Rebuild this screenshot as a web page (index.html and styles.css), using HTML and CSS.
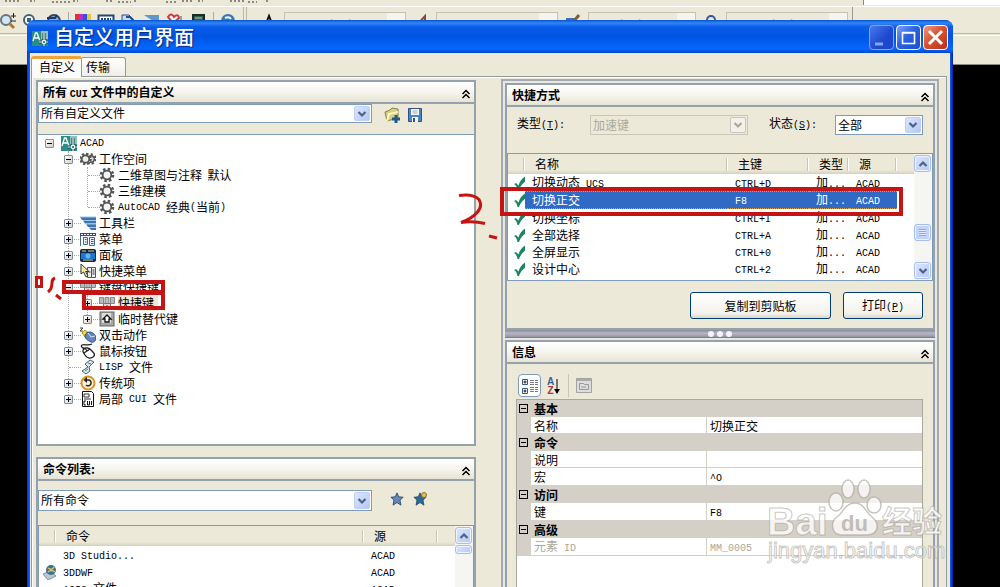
FILE: index.html
```html
<!DOCTYPE html>
<html lang="zh-CN">
<head>
<meta charset="utf-8">
<title>自定义用户界面</title>
<link rel="stylesheet" href="styles.css">
</head>
<body>
<svg class="defs" width="0" height="0" aria-hidden="true">
  <symbol id="i-chev" viewBox="0 0 10 8"><path d="M1.5 2 5 5.5 8.5 2" fill="none" stroke="currentColor" stroke-width="2.2"/></symbol>
  <symbol id="i-collapse" viewBox="0 0 10 10"><path d="M1.5 5 5 1.5 8.500 5M1.500 9 5 5.500 8.500 9" fill="none" stroke="#000" stroke-width="1.5"/></symbol>
  <symbol id="i-acad" viewBox="0 0 16 16"><path d="M0 1h16v15H0z" fill="#2b8d88"/><path d="M9 1h7v8h-7z" fill="#8fc3bd"/><path d="M1 11 3.500 3h1.500l3 8M2 8h5" stroke="#fff" stroke-width="1.300" fill="none"/><path d="M12 3v13M7 12h9" stroke="#123f44" stroke-width="3"/><path d="M12 3v13M7 12h9" stroke="#fff" stroke-width="1.200"/><path d="M10.500 10.500h3v3h-3z" fill="#2b8d88" stroke="#fff"/></symbol>
  <symbol id="i-gear" viewBox="0 0 16 16"><circle cx="8" cy="8" r="5.800" fill="none" stroke="#555" stroke-width="3" stroke-dasharray="2.400 2.150"/><circle cx="8" cy="8" r="4.300" fill="#f4f4f4" stroke="#555" stroke-width="1.800"/></symbol>
  <symbol id="i-gears" viewBox="0 0 16 16"><circle cx="11" cy="8" r="4.200" fill="#fff" stroke="#555" stroke-width="3" stroke-dasharray="2 1.800"/><circle cx="11" cy="8" r="3.200" fill="#ddd" stroke="#555" stroke-width="1.400"/><circle cx="5.500" cy="8" r="5" fill="#fff" stroke="#555" stroke-width="2.600" stroke-dasharray="2.200 1.700"/><circle cx="5.500" cy="8" r="3.700" fill="#eee" stroke="#555" stroke-width="1.700"/></symbol>
  <symbol id="i-bars" viewBox="0 0 16 16"><path d="M0 2h16v3H2zM3 5.500h13v3H5zM6 9h10v3H8zM9 12.500h7v2.500h-5z" fill="#3e73ae"/><path d="M0 2h16M3 5.500h13M6 9h10M9 12.500h7" stroke="#9fc6e8"/></symbol>
  <symbol id="i-menu" viewBox="0 0 16 16"><path d="M0 2h16v3H0z" fill="#23517f"/><path d="M1 3.500h14" stroke="#fff" stroke-dasharray="2 1"/><path d="M.5 5v10M3.500 6.500h4v7h-4zM9.500 6.500h5v8h-5z" stroke="#48698b" fill="#e8eef4"/><path d="M5 8.500h1.500M5 11h1.500M11 8.500h2.500M11 10.500h2.500M11 12.500h2.500" stroke="#36597c"/></symbol>
  <symbol id="i-panel" viewBox="0 0 16 16"><rect y="2" width="16" height="13" rx="2" fill="#10294d"/><path d="M1 6h14v6H1z" fill="#1b78d0"/><path d="M2 4h4M8 4h6M3 13h10" stroke="#ddd27a"/><circle cx="8" cy="9" r="2.500" fill="#65b5ed"/></symbol>
  <symbol id="i-ctx" viewBox="0 0 16 16"><path d="M7.500 4.500h4v10h-4zM11.500 4.500h4v10h-4z" fill="#eee" stroke="#555"/><path d="M12.500 7h2M12.500 9h2M12.500 11h2M8.500 9h2" stroke="#333"/><path d="M1 1v10l2.500-2L6 14l2-1-2.500-4.500H9z" fill="#f5eda1" stroke="#333"/></symbol>
  <symbol id="i-keys" viewBox="0 0 16 16"><path d="M.5 2.500h4v6h-4zM6 2.500h4v6H6zM11.500 2.500h4v6h-4z" fill="#bbb" stroke="#888"/><path d="M4.500 8.500h7v6h-7z" fill="#d8d8d8" stroke="#777"/><path d="M6 13l2-3 2 3z" fill="#222"/></symbol>
  <symbol id="i-shift" viewBox="0 0 16 16"><rect x="1" y="1" width="14" height="14" fill="#a7a7a7" stroke="#666"/><path d="M3 2h9v10H3z" fill="#ddd"/><path d="M8 4l4 4h-2v3H6V8H4z" fill="#fff" stroke="#111" stroke-width="1.300"/></symbol>
  <symbol id="i-dbl" viewBox="0 0 16 16"><path d="M2 6 5 3l5 4-4 4z" fill="#f6d83e" stroke="#b79420"/><path d="M5 9c0-3 3-4 5-4s6 3 6 6-3 5-5 4-6-3-6-6z" fill="#6286bf" stroke="#274983"/><path d="M8 6l3 4 4-1" fill="none" stroke="#d6e4f6"/><path d="M0 1h3L0 4h3" fill="none" stroke="#444"/></symbol>
  <symbol id="i-mouse" viewBox="0 0 16 16"><path d="M4 6c2-2 5-1 7 1 3 3 5 5 2 7s-6 1-8-2S2 8 4 6z" fill="#fff" stroke="#222" stroke-width="1.300"/><path d="M4 10l6-4M7 8 5 5M5 5C3 6 0 3 2 2s6 1 10-1" fill="none" stroke="#222" stroke-width="1.300"/></symbol>
  <symbol id="i-lisp" viewBox="0 0 16 16"><path d="M5 5l5-4 4 2-5 5 1 4-4 3-4-3 6-4z" fill="#d7e8ee" stroke="#49616f"/><path d="M8 4l3 1M5 12l3-2" stroke="#498097"/></symbol>
  <symbol id="i-legacy" viewBox="0 0 16 16"><circle cx="8" cy="8" r="6.500" fill="#fff1cf" stroke="#d9932d" stroke-width="2"/><path d="M6 5h3a3 3 0 1 1-3 5" fill="none" stroke="#222" stroke-width="1.500"/><path d="M7 2v6L3.500 5z" fill="#222"/></symbol>
  <symbol id="i-cui" viewBox="0 0 16 16"><path d="M2.500.500h9l2 2v13h-11z" fill="#fff" stroke="#111"/><path d="M4 3h5v3H4zM4 8h7" stroke="#333" fill="none"/><path d="M6 10H4v4h2M7.500 10v4h2v-4M11.500 10v4" fill="none" stroke="#111"/></symbol>
  <symbol id="i-star" viewBox="0 0 16 16"><path d="M8 1l2 4.500 5 .500-3.600 3.200L12.500 15 8 12l-4.500 3 1.100-5.800L1 6l5-.500z" fill="currentColor" stroke="#29486f"/></symbol>
  <symbol id="i-tick" viewBox="0 0 14 16"><path d="M1 9l2-1 2.500 2.500C7 6 9 3 13 1v5C9 9 7 12 6 15H4.500C4 12 3 10 1 9z" fill="#1d8564"/></symbol>
</svg>

<header class="app-bar">
  <div class="app-row app-row-top">
    <svg class="crumbs" width="280" height="4" viewBox="0 0 280 4" aria-hidden="true"><path d="M5 1h16M30 1h5M52 2h18M73 1h5M106 1h8M118 2h13M134 1h3M166 2h10M182 1h12M198 1h5M230 1h14M248 2h9M266 1h4" stroke="#8c8a80" stroke-width="2" stroke-dasharray="2 2"/></svg>
    <div class="app-sheet"></div>
  </div>
  <div class="app-row app-tools">
    <svg class="tools-icons" width="240" height="28" viewBox="0 0 240 28" aria-hidden="true">
      <circle cx="6" cy="13" r="5" fill="#d5e6f3" stroke="#66757f" stroke-width="2"/><path d="m10 17 4 4" stroke="#b27630" stroke-width="3"/><path d="M11 9h5M13.500 6v5M11 14h5" stroke="#222"/>
      <circle cx="29" cy="13" r="5" fill="#fff" stroke="#495e75" stroke-width="2"/><path d="M27 11h4v4h-4z" fill="#345c97"/>
      <circle cx="54" cy="14" r="6" fill="#8faecc" stroke="#33465f" stroke-width="2"/><path d="M47 11h8l2-3" stroke="#19376b" stroke-width="2" fill="none"/>
      <path d="M68.500 5v20" stroke="#aaa"/><path d="M75 7h4v6h-4z" fill="#e62e3b"/><path d="M79 7h4v6h-4z" fill="#b52ed0"/><path d="M83 7h4v6h-4z" fill="#3353dc"/><path d="M87 7h4v6h-4z" fill="#e2c83b"/>
      <path d="M98.500 8.500h15v12h-15z" fill="#fff" stroke="#234677" stroke-width="2"/><path d="M101 12h10" stroke="#234677" stroke-width="2" stroke-dasharray="2 1"/>
      <path d="M122 8h7l4 4v12h-11z" fill="#c7dcf2" stroke="#24518c"/><path d="M126 10h4l4 4" stroke="#24518c" stroke-width="2" fill="none"/>
      <path d="M144 8h15v10z" fill="#5d97cb"/><path d="M168 10q3-5 6 0 4-4 5 1l-6 5z" fill="#fff" stroke="#d5383c" stroke-width="2"/><path d="M181 9v10" stroke="#555"/>
      <path d="M193 8h11v14h-11z" fill="#345c4a" stroke="#1a2c26" stroke-width="2"/><path d="M195 11h7" stroke="#b5d299"/><path d="M213.500 5v20" stroke="#aaa"/><circle cx="228" cy="14" r="7" fill="#3678b6"/><path d="M225 11q4-2 6 1" stroke="#fff" stroke-width="2" fill="none"/>
    </svg>
    <div class="tool-set">
      <svg class="tool-ic" width="16" height="16" viewBox="0 0 16 16" aria-hidden="true"><path d="M4 14 8 4l4 10M5 11h6" fill="none" stroke="#111" stroke-width="2"/></svg>
      <select class="back-select" aria-label="文字样式" disabled><option>Standard</option></select>
      <svg class="tool-ic" width="16" height="16" viewBox="0 0 16 16" aria-hidden="true"><path d="M3 14 12 4v9" fill="none" stroke="#8f4434" stroke-width="2"/></svg>
      <select class="back-select" aria-label="标注样式" disabled><option>ISO-25</option></select>
      <svg class="tool-ic" width="16" height="16" viewBox="0 0 16 16" aria-hidden="true"><path d="M1 6h10v8H1z" fill="#3970b7"/><path d="m9 9 5-6" stroke="#825d38" stroke-width="3"/></svg>
      <select class="back-select near" aria-label="表格样式" disabled><option>Standard</option></select>
      <svg class="tool-ic" width="16" height="16" viewBox="0 0 16 16" aria-hidden="true"><circle cx="8" cy="8" r="4" fill="none" stroke="#3059a8" stroke-width="2"/></svg>
      <select class="back-select" aria-label="引线样式" disabled><option>Standard</option></select>
    </div>
  </div>
  <div class="app-row app-row-last"></div>
</header>

<main class="dialog">
  <div class="titlebar">
    <svg width="16" height="16"><use href="#i-acad"/></svg>
    <h1>自定义用户界面</h1>
    <button class="win min" aria-label="最小化"><svg width="24" height="25" viewBox="0 0 24 25"><path d="M5 18h8" stroke="#86a3f2" stroke-width="3"/></svg></button>
    <button class="win max" aria-label="最大化"><svg width="24" height="25" viewBox="0 0 24 25"><path d="M5.500 6.500h12v11h-12zM5 7h13" fill="none" stroke="#fff" stroke-width="1.600"/></svg></button>
    <button class="win close" aria-label="关闭"><svg width="24" height="25" viewBox="0 0 24 25"><path d="m5 5 13 13M18 5 5 18" stroke="#fff" stroke-width="3"/></svg></button>
  </div>

  <div class="client">
    <div class="tabs" role="tablist">
      <button class="tab active" role="tab" aria-selected="true">自定义</button>
      <button class="tab" role="tab" aria-selected="false">传输</button>
    </div>
    <div class="page">
      <div class="left">
        <section class="panel">
          <div class="panel-head"><h2>所有 <span class="en">CUI</span> 文件中的自定义</h2><button class="fold" aria-label="折叠"><svg width="10" height="10"><use href="#i-collapse"/></svg></button></div>
          <div class="bar">
            <div class="combo grow"><select aria-label="自定义文件"><option>所有自定义文件</option></select><span class="drop"><svg width="10" height="8"><use href="#i-chev"/></svg></span></div>
            <div class="bar-tools">
              <button class="icon" aria-label="加载"><svg width="16" height="16" viewBox="0 0 16 16"><path d="M1 5 6 3l2-2 6 1v9l-11 3z" fill="#d8cf86" stroke="#85814c"/><path d="M3 14 5 7l9-2" fill="none" stroke="#fff7bd" stroke-width="2"/><path d="M12 8v8M8 12h8" stroke="#245c84" stroke-width="3"/></svg></button>
              <button class="icon" aria-label="保存"><svg width="16" height="16" viewBox="0 0 16 16"><path d="M1.500 1.500h13v13h-13z" fill="#4b83c5" stroke="#315183"/><path d="M4 2h8v6H4zM5 10h6v5H5z" fill="#f4f7fc"/><path d="M5.500 4h5M5.500 6h5" stroke="#aaa"/><path d="M6 11h2v4H6z" fill="#315183"/></svg></button>
            </div>
          </div>
          <div class="tree-box">
            <ul class="tree root">
              <li><div class="node"><button class="exp minus" aria-label="折叠"></button><svg width="16" height="16"><use href="#i-acad"/></svg><span class="en">ACAD</span></div>
                <ul class="tree">
                  <li><div class="node"><button class="exp minus" aria-label="折叠"></button><svg width="16" height="16"><use href="#i-gears"/></svg>工作空间</div>
                    <ul class="tree">
                      <li><div class="node"><i class="exp none"></i><svg width="16" height="16"><use href="#i-gear"/></svg>二维草图与注释&nbsp; 默认</div></li>
                      <li><div class="node"><i class="exp none"></i><svg width="16" height="16"><use href="#i-gear"/></svg>三维建模</div></li>
                      <li><div class="node"><i class="exp none"></i><svg width="16" height="16"><use href="#i-gear"/></svg><span class="en">AutoCAD </span>经典<span class="en">(</span>当前<span class="en">)</span></div></li>
                    </ul></li>
                  <li><div class="node"><button class="exp" aria-label="展开"></button><svg width="16" height="16"><use href="#i-bars"/></svg>工具栏</div></li>
                  <li><div class="node"><button class="exp" aria-label="展开"></button><svg width="16" height="16"><use href="#i-menu"/></svg>菜单</div></li>
                  <li><div class="node"><button class="exp" aria-label="展开"></button><svg width="16" height="16"><use href="#i-panel"/></svg>面板</div></li>
                  <li><div class="node"><button class="exp" aria-label="展开"></button><svg width="16" height="16"><use href="#i-ctx"/></svg>快捷菜单</div></li>
                  <li><div class="node"><button class="exp minus" aria-label="折叠"></button><svg width="16" height="16"><use href="#i-keys"/></svg>键盘快捷键</div>
                    <ul class="tree">
                      <li><div class="node"><button class="exp" aria-label="展开"></button><svg width="16" height="16"><use href="#i-keys"/></svg><span class="chosen">快捷键</span></div></li>
                      <li><div class="node"><button class="exp" aria-label="展开"></button><svg width="16" height="16"><use href="#i-shift"/></svg>临时替代键</div></li>
                    </ul></li>
                  <li><div class="node"><button class="exp" aria-label="展开"></button><svg width="16" height="16"><use href="#i-dbl"/></svg>双击动作</div></li>
                  <li><div class="node"><button class="exp" aria-label="展开"></button><svg width="16" height="16"><use href="#i-mouse"/></svg>鼠标按钮</div></li>
                  <li><div class="node"><i class="exp none"></i><svg width="16" height="16"><use href="#i-lisp"/></svg><span class="en">LISP </span>文件</div></li>
                  <li><div class="node"><button class="exp" aria-label="展开"></button><svg width="16" height="16"><use href="#i-legacy"/></svg>传统项</div></li>
                  <li><div class="node"><button class="exp" aria-label="展开"></button><svg width="16" height="16"><use href="#i-cui"/></svg>局部<span class="en"> CUI </span>文件</div></li>
                </ul></li>
            </ul>
          </div>
        </section>

        <section class="panel commands">
          <div class="panel-head"><h2>命令列表:</h2><button class="fold" aria-label="折叠"><svg width="10" height="10"><use href="#i-collapse"/></svg></button></div>
          <div class="bar tall">
            <div class="combo grow"><select aria-label="命令类别"><option>所有命令</option></select><span class="drop"><svg width="10" height="8"><use href="#i-chev"/></svg></span></div>
            <div class="bar-tools">
              <button class="icon star" aria-label="查找命令"><svg width="14" height="14"><use href="#i-star"/></svg></button>
              <button class="icon star new" aria-label="新建命令"><svg width="14" height="14" viewBox="0 0 14 14"><use href="#i-star"/><circle cx="11" cy="3" r="2.500" fill="#e8bd55" stroke="#94702a"/></svg></button>
            </div>
          </div>
          <div class="list">
            <table>
              <colgroup><col class="c-ic"><col><col class="c-src"><col class="c-end"></colgroup>
              <thead><tr><th></th><th>命令</th><th>源</th><th></th></tr></thead>
              <tbody>
                <tr><td></td><td><span class="en">3D Studio...</span></td><td><span class="en">ACAD</span></td><td></td></tr>
                <tr><td><svg class="row-ic" width="14" height="16" viewBox="0 0 14 16"><path d="M0 10l7-3 6 5-8 4z" fill="#b9c8d2" stroke="#8194a0"/><circle cx="8" cy="6" r="5" fill="#3d7191"/><path d="M5 4q4 3 6-1M5 8q3-3 7 0" fill="none" stroke="#d8c66f" stroke-width="1.500"/></svg></td><td><span class="en">3DDWF</span></td><td><span class="en">ACAD</span></td><td></td></tr>
                <tr><td></td><td><span class="en">ACIS </span>文件</td><td><span class="en">ACAD</span></td><td></td></tr>
              </tbody>
            </table>
            <div class="scroll"><button class="sbtn up" aria-label="向上"><svg width="10" height="8"><use href="#i-chev"/></svg></button><span class="thumb small"></span></div>
          </div>
        </section>
      </div>

      <div class="right">
        <section class="panel">
          <div class="panel-head"><h2>快捷方式</h2><button class="fold" aria-label="折叠"><svg width="10" height="10"><use href="#i-collapse"/></svg></button></div>
          <div class="filters">
            <label class="f-type" for="type">类型<span class="en">(<u>T</u>):</span></label>
            <div class="combo grow off"><select id="type" disabled><option>加速键</option></select><span class="drop"><svg width="10" height="8"><use href="#i-chev"/></svg></span></div>
            <label class="f-state" for="state">状态<span class="en">(<u>S</u>):</span></label>
            <div class="combo state"><select id="state"><option>全部</option></select><span class="drop"><svg width="10" height="8"><use href="#i-chev"/></svg></span></div>
          </div>
          <div class="list keys">
            <table>
              <colgroup><col class="k-ic"><col><col class="k-key"><col class="k-type"><col class="k-src"><col class="k-end"></colgroup>
              <thead><tr><th></th><th>名称</th><th>主键</th><th>类型</th><th>源</th><th></th></tr></thead>
              <tbody>
                <tr><td><svg class="tick" width="14" height="16"><use href="#i-tick"/></svg></td><td>切换动态<span class="en"> UCS</span></td><td><span class="en">CTRL+D</span></td><td>加<span class="en">...</span></td><td><span class="en">ACAD</span></td><td></td></tr>
                <tr class="sel"><td><svg class="tick" width="14" height="16"><use href="#i-tick"/></svg></td><td>切换正交</td><td><span class="en">F8</span></td><td>加<span class="en">...</span></td><td><span class="en">ACAD</span></td><td></td></tr>
                <tr><td><svg class="tick" width="14" height="16"><use href="#i-tick"/></svg></td><td>切换坐标</td><td><span class="en">CTRL+I</span></td><td>加<span class="en">...</span></td><td><span class="en">ACAD</span></td><td></td></tr>
                <tr><td><svg class="tick" width="14" height="16"><use href="#i-tick"/></svg></td><td>全部选择</td><td><span class="en">CTRL+A</span></td><td>加<span class="en">...</span></td><td><span class="en">ACAD</span></td><td></td></tr>
                <tr><td><svg class="tick" width="14" height="16"><use href="#i-tick"/></svg></td><td>全屏显示</td><td><span class="en">CTRL+0</span></td><td>加<span class="en">...</span></td><td><span class="en">ACAD</span></td><td></td></tr>
                <tr><td><svg class="tick" width="14" height="16"><use href="#i-tick"/></svg></td><td>设计中心</td><td><span class="en">CTRL+2</span></td><td>加<span class="en">...</span></td><td><span class="en">ACAD</span></td><td></td></tr>
              </tbody>
            </table>
            <div class="scroll"><button class="sbtn up" aria-label="向上"><svg width="10" height="8"><use href="#i-chev"/></svg></button><span class="thumb mid"></span><button class="sbtn down" aria-label="向下"><svg width="10" height="8"><use href="#i-chev"/></svg></button></div>
          </div>
          <div class="actions"><button class="push wide">复制到剪贴板</button><button class="push">打印<span class="en">(<u>P</u>)</span></button></div>
        </section>
        <div class="splitter"><i></i><i></i><i></i></div>
        <section class="panel info">
          <div class="panel-head"><h2>信息</h2><button class="fold" aria-label="折叠"><svg width="10" height="10"><use href="#i-collapse"/></svg></button></div>
          <div class="grid-tools">
            <button class="gt on" aria-label="按分类"><svg width="18" height="18" viewBox="0 0 18 18"><path d="M1.500 2.500h5v5h-5zM1.500 11.500h5v5h-5z" fill="#fff" stroke="#36597c"/><path d="M2.500 5h3M4 3.500v3M2.500 14h3M4 12.500v3" stroke="#111"/><path d="M9 3.500h8M9 5.500h8M9 7.500h8M9 10.500h8M9 12.500h8M9 14.500h8" stroke="#778" stroke-dasharray="4 1"/></svg></button>
            <button class="gt az" aria-label="按字母"><span class="az-t"><b>A</b><b>Z</b></span><svg width="6" height="18" viewBox="0 0 6 18"><path d="M3 2v12" stroke="#000"/><path d="M0 12h6l-3 5z"/></svg></button>
            <button class="gt sheet" aria-label="属性页"><svg width="16" height="15" viewBox="0 0 16 15"><path d="M.5.5h15v14H.5z" fill="#ddd" stroke="#a3a3a0"/><path d="M1 2h14" stroke="#aaa" stroke-width="2"/><path d="M3.500 5.500h4l1 1h4v5h-9zM5 9h5" fill="none" stroke="#999"/></svg></button>
          </div>
          <div class="grid-box">
            <table class="props">
              <colgroup><col class="p-g"><col class="p-n"><col></colgroup>
              <tbody>
                <tr class="cat"><th><button class="box" aria-label="折叠"></button></th><th colspan="2">基本</th></tr>
                <tr><td></td><td>名称</td><td>切换正交</td></tr>
                <tr class="cat"><th><button class="box" aria-label="折叠"></button></th><th colspan="2">命令</th></tr>
                <tr><td></td><td>说明</td><td></td></tr>
                <tr><td></td><td>宏</td><td><span class="en">^O</span></td></tr>
                <tr class="cat"><th><button class="box" aria-label="折叠"></button></th><th colspan="2">访问</th></tr>
                <tr><td></td><td>键</td><td><span class="en">F8</span></td></tr>
                <tr class="cat"><th><button class="box" aria-label="折叠"></button></th><th colspan="2">高级</th></tr>
                <tr class="dim"><td></td><td>元素<span class="en"> ID</span></td><td><span class="en">MM_0005</span></td></tr>
              </tbody>
            </table>
          </div>
        </section>
      </div>
    </div>
  </div>
</main>

<svg class="marks" width="1000" height="587" viewBox="0 0 1000 587" aria-hidden="true">
  <g fill="none" stroke="#c41414" stroke-width="4">
    <rect x="64" y="282" width="99" height="10"/>
    <rect x="84" y="293" width="79" height="15"/>
    <rect x="502" y="189" width="399" height="25"/>
    <path d="M36.500 277.500h5v9h-5zM55 278q-3 1-3 5 0 6-4 9M56 295l5 4M459 195.500q14-2 20 4 4 7-2 13-5 6-16 10 12-2 24 1M489 236l8 2" stroke-width="3"/>
  </g>
</svg>

<svg class="stamp" width="184" height="90" viewBox="0 0 184 90">
  <g fill="#fff" fill-opacity=".75" stroke="#aaa49c" stroke-opacity=".65" stroke-width="1.500">
    <ellipse cx="83" cy="11" rx="6" ry="9"/>
    <ellipse cx="99" cy="11" rx="6" ry="9"/>
    <ellipse cx="109" cy="27" rx="7" ry="8"/>
    <ellipse cx="71" cy="24" rx="7" ry="9"/>
    <path d="M90 25c-10 0-11 9-18 14-7 5-6 18 5 18h25c11 0 13-11 6-17-8-6-9-15-18-15z"/>
  </g>
  <g class="stamp-text">
    <text x="2" y="57" font-size="39">Bai</text>
    <text x="76" y="53" font-size="22" class="dark">du</text>
    <text x="117" y="54" class="cjk">经验</text>
    <text x="3" y="80" font-size="22" class="url">jingyan.baidu.com</text>
  </g>
</svg>
</body>
</html>
```
FILE: styles.css
```css
* { box-sizing: border-box; }
html, body { height: 100%; }
body {
  margin: 0;
  position: relative;
  overflow: hidden;
  background: #000;
  color: #000;
  font: 12px/16px "Noto Sans CJK SC", sans-serif;
}
h1, h2, ul { margin: 0; padding: 0; font-weight: normal; }
button, select { font: inherit; color: inherit; margin: 0; padding: 0; border: 0; background: none; }
svg { display: block; flex: none; }
table { border-collapse: separate; border-spacing: 0; table-layout: fixed; width: 100%; }
td, th { padding: 0; text-align: left; font-weight: normal; overflow: hidden; white-space: nowrap; }
.defs { position: absolute; }
.en { font-family: "Liberation Mono", monospace; font-size: 10px; line-height: 12px; white-space: pre; }

/* Application bars behind the dialog */
.app-bar { background: #ece9d8; border-bottom: 1px solid #8c8a80; }
.app-row { display: flex; }
.app-row-top { height: 7px; justify-content: space-between; border-bottom: 1px solid #fff; }
.app-sheet { width: 137px; height: 5px; background: #fff; border-left: 1px solid #888; }
.app-tools { height: 27px; border-bottom: 1px solid #bdbaaa; }
.tool-set {
  display: flex;
  align-items: flex-start;
  gap: 7px;
  width: 610px;
  margin-left: 3px;
  padding: 5px 4px 0 14px;
  border-left: 4px double #bbb8a8;
  border-right: 1px solid #999;
}
.back-select { appearance: none; flex: 1 1 0; min-width: 0; height: 22px; padding: 2px 0 0 18px; border: 1px solid #c5c2b2; color: #99968a; font: 10px "Liberation Mono", monospace; background: linear-gradient(#f5f4ee, #f5f4ee) right / 18px 100% no-repeat; opacity: 1; }
.back-select.near { padding-left: 4px; }
.app-row-last { height: 29px; border-top: 1px solid #fff; margin-top: 1px; }

/* Dialog */
.dialog {
  position: absolute;
  left: 27px; right: 47px; top: 20px; bottom: 0;
  overflow: hidden;
  display: flex;
  flex-direction: column;
  background: linear-gradient(90deg, #0831d9, #1a5fe8 3px, #1a5fe8 calc(100% - 3px), #001ea0);
  border-radius: 8px 8px 0 0;
  padding: 0 3px;
}
.titlebar {
  flex: none;
  height: 33px;
  margin: 0 -3px;
  padding: 2px 5px 0;
  display: flex;
  align-items: center;
  gap: 2px;
  background: linear-gradient(#0a52d0, #2f86f8 3px, #0a5be8 7px, #0054e3 17px, #0668ff 29px, #0045c8);
}
.titlebar h1 { flex: 1; margin: 0 0 2px 4px; color: #fff; font-size: 20px; line-height: 26px; font-weight: 500; text-shadow: 1px 1px 1px #0a2a80; }
.win { width: 25px; height: 25px; border: 1px solid #fff; border-radius: 4px; overflow: hidden; background: linear-gradient(135deg, #7fa4f8, #2a62e0 45%, #1b4fd0); }
.win.min { border-color: #86a3f2; background: linear-gradient(135deg, #4a78ea, #1c48cf 60%); }
.win.close { background: linear-gradient(135deg, #ec9a84, #dc5230 45%, #b8321a); }
.client { flex: 1; min-height: 0; display: flex; flex-direction: column; background: #ece9d8; border-left: 1px solid #e8f0fb; }
.tabs { flex: none; height: 23px; padding-top: 3px; display: flex; align-items: flex-end; }
.tab { height: 19px; width: 44px; padding: 0 0 1px 4px; text-align: left; background: linear-gradient(#fff, #f0efe6); border: 1px solid #919b9c; border-left: 0; border-bottom: 0; border-radius: 0 3px 0 0; }
.tab.active { position: relative; z-index: 1; height: 21px; width: 51px; margin-bottom: -1px; padding: 0 0 2px 7px; background: #fcfcfe; border: 1px solid #919b9c; border-top: 3px solid #eba43c; border-bottom: 0; border-radius: 3px 3px 0 0; }
.page { flex: 1; min-height: 0; margin-right: 3px; padding: 2px 7px 0 4px; display: flex; gap: 25px; border: 1px solid #919b9c; border-bottom: 0; box-shadow: inset 1px 1px #fff; }
.left { flex: 1 1 440px; min-width: 0; padding-top: 1px; }
.right { flex: 1 1 438px; min-width: 0; padding: 2px; border: 2px solid #a3aab0; border-bottom: 0; background: #e9e8e0; }

/* Panels */
.panel { border: 2px solid #96a2ab; background: #ece9d8; }
.panel-head { height: 22px; padding: 0 3px 0 5px; display: flex; justify-content: space-between; align-items: center; background: linear-gradient(#fff, #f6f5ee 50%, #e7e4d5); border-bottom: 2px solid #96a2ab; }
.panel-head h2 { font-size: 12px; font-weight: bold; line-height: 18px; }
.fold { display: flex; padding-top: 4px; }
.bar { height: 30px; display: flex; align-items: flex-start; }
.bar.tall { height: 44px; padding-top: 9px; }
.bar-tools { width: 102px; padding: 3px 0 0 12px; display: flex; gap: 7px; }
.bar.tall .bar-tools { padding: 2px 0 0 18px; gap: 9px; }
.icon { display: flex; }
.star { color: #6489b6; }
.star.new { color: #286b96; }
.commands { margin-top: 11px; }

.combo { position: relative; height: 19px; background: #fff; border: 1px solid #7f9db9; }
.grow { flex: 1; min-width: 0; }
.tall .combo { height: 21px; }
.combo select { appearance: none; width: 100%; height: 100%; padding: 0 20px 2px 2px; line-height: 16px; opacity: 1; }
.drop { position: absolute; right: 1px; top: 1px; bottom: 1px; width: 16px; display: flex; align-items: center; justify-content: center; color: #4d6185; background: linear-gradient(135deg, #dce6fd, #b4c8f6); border: 1px solid #bfcff5; border-radius: 2px; pointer-events: none; }

/* Tree */
.tree-box { min-height: 310px; background: #fff; border-top: 1px solid #7f9db9; }
.tree { list-style: none; position: relative; padding-left: 19px; }
.tree.root { padding-left: 6px; }
.tree:not(.root)::before { content: ""; position: absolute; left: 24px; top: 0; bottom: 8px; border-left: 1px dotted #a5a5a5; }
.node { position: relative; display: flex; align-items: center; height: 16px; white-space: nowrap; }
.node > svg { margin: 0 3px 0 7px; position: relative; }
.node > .en { padding-top: 2px; }
.tree:not(.root) > li > .node::before { content: ""; position: absolute; left: 6px; width: 12px; top: 8px; border-top: 1px dotted #a5a5a5; }
.exp { position: relative; flex: none; width: 9px; height: 9px; margin-left: 1px; border: 1px solid #7c8fa8; border-radius: 1px; background: linear-gradient(#000, #000) center / 5px 1px no-repeat, linear-gradient(#000, #000) center / 1px 5px no-repeat, linear-gradient(135deg, #fff, #d5d0c3); }
.exp.minus { background: linear-gradient(#000, #000) center / 5px 1px no-repeat, linear-gradient(135deg, #fff, #d5d0c3); }
.exp.none { visibility: hidden; }
.chosen { background: #ece9d8; padding-right: 4px; }

/* Lists */
.list { display: flex; height: 128px; overflow: hidden; background: #fff; border: 1px solid #7f9db9; }
.list table { flex: 1; min-width: 0; align-self: flex-start; }
.list th { height: 20px; padding: 0 0 0 10px; background: linear-gradient(90deg, transparent 0 calc(100% - 2px), #c9c5b4 0 calc(100% - 1px), #fff 0) 0 4px / 100% 13px no-repeat, linear-gradient(#ece9d8 16px, #d5d1c0); }
.list th:last-child { background: linear-gradient(#ece9d8 16px, #d5d1c0); }
.list td { height: 17px; line-height: 15px; padding: 0 0 0 7px; }
.c-ic { width: 17px; }
.c-src { width: 74px; }
.c-end { width: 17px; }
.k-ic { width: 17px; }
.k-key { width: 81px; }
.k-type { width: 40px; }
.k-src { width: 48px; }
.k-end { width: 17px; }
.list td:first-child { padding: 0; }
.list .tick { margin-left: 5px; }
.row-ic { margin-left: 4px; }
.sel td:not(:first-child):not(:last-child) { line-height: 14px; background: #316ac5; color: #fff; border-top: 1px dotted #d09d50; border-bottom: 1px dotted #d09d50; }
.scroll { flex: none; width: 18px; display: flex; flex-direction: column; background: #f5f5f1; padding: 1px 0; }
.sbtn, .thumb { flex: none; width: 17px; height: 17px; display: flex; align-items: center; justify-content: center; color: #4d6185; background: linear-gradient(135deg, #dce6fd, #b4c8f6); border: 1px solid #a9bdec; box-shadow: inset 0 0 0 1px #eef3ff; border-radius: 3px; }
.up svg { transform: rotate(180deg); }
.down { margin-top: auto; }
.thumb.small { height: 9px; margin-top: 1px; }
.thumb.mid { margin-top: 52px; background: repeating-linear-gradient(#8ca8e8 0 1px, #e3ebff 1px 2px) center / 7px 7px no-repeat, #c3d3fb; }

/* Shortcut panel */
.filters { height: 46px; padding: 8px 10px 0; display: flex; align-items: flex-start; }
.filters label { flex: none; line-height: 16px; }
.f-type { width: 73px; }
.f-state { width: 87px; padding-left: 21px; }
.filters .combo { height: 20px; }
.filters select { padding-bottom: 0; }
.state { width: 88px; }
.off, .off .drop { background: #ece9d8; border-color: #c9c7ba; color: #aca899; }
.off .drop { background: #f2f1ea; }
.actions { display: flex; justify-content: flex-end; gap: 12px; padding: 11px 10px 9px; }
.push { width: 80px; height: 27px; border: 1px solid #003c74; border-radius: 3px; background: linear-gradient(#fff, #f3f2ec 80%, #dcd8cc); }
.push.wide { width: 141px; }
.splitter { height: 8px; margin-bottom: 2px; display: flex; align-items: center; justify-content: center; gap: 3px; background: linear-gradient(#898c98, #b7b6c6 40%, #9a9aa8 80%, #74757f); }
.splitter i { width: 6px; height: 6px; border-radius: 3px; background: #f4f4fb; }

/* Property grid */
.info { min-height: 260px; }
.grid-tools { height: 35px; padding: 10px 9px 0 11px; display: flex; gap: 3px; }
.gt { height: 23px; display: flex; align-items: center; justify-content: center; }
.gt.on { width: 23px; border: 1px solid #7f9db9; border-radius: 4px; background: #fff; }
.az { width: 19px; }
.az-t { display: flex; flex-direction: column; font: bold 10px/9px "Liberation Sans", sans-serif; color: #3b5f9c; }
.az-t b + b { color: #a03a32; }
.sheet { width: 28px; margin-left: 2px; padding-left: 2px; border-left: 1px solid #c9c5b4; }
.grid-box { margin: 0 10px 0 9px; min-height: 220px; background: #fff; border: 1px solid #aca899; border-bottom: 0; }
.p-g { width: 14px; }
.p-n { width: 175px; }
.props td, .props th { height: 17px; line-height: 15px; padding-left: 3px; border-bottom: 1px solid #d4d0c8; }
.props td:last-child { border-left: 1px solid #d4d0c8; }
.props .cat th, .props td:first-child { background: #d4d0c8; padding-left: 2px; }
.props .cat th { font-weight: bold; }
.props .cat th + th { padding-left: 3px; }
.box { display: block; width: 9px; height: 9px; border: 1px solid #000; background: linear-gradient(#000, #000) center / 5px 1px no-repeat; }
.dim { color: #aca899; }

/* Overlays */
.marks { position: absolute; left: 0; top: 0; pointer-events: none; }
.stamp { position: absolute; left: 765px; top: 478px; pointer-events: none; }
.stamp-text { font-family: "Liberation Sans", sans-serif; font-weight: bold; fill: rgba(255, 255, 255, .8); stroke: rgba(150, 145, 138, .5); stroke-width: 1px; }
.stamp-text .cjk { font-family: "Noto Sans CJK SC", sans-serif; font-size: 30px; }
.stamp-text .url { font-weight: normal; }
.stamp-text .dark { fill: rgba(180, 174, 166, .8); stroke: none; }
```
